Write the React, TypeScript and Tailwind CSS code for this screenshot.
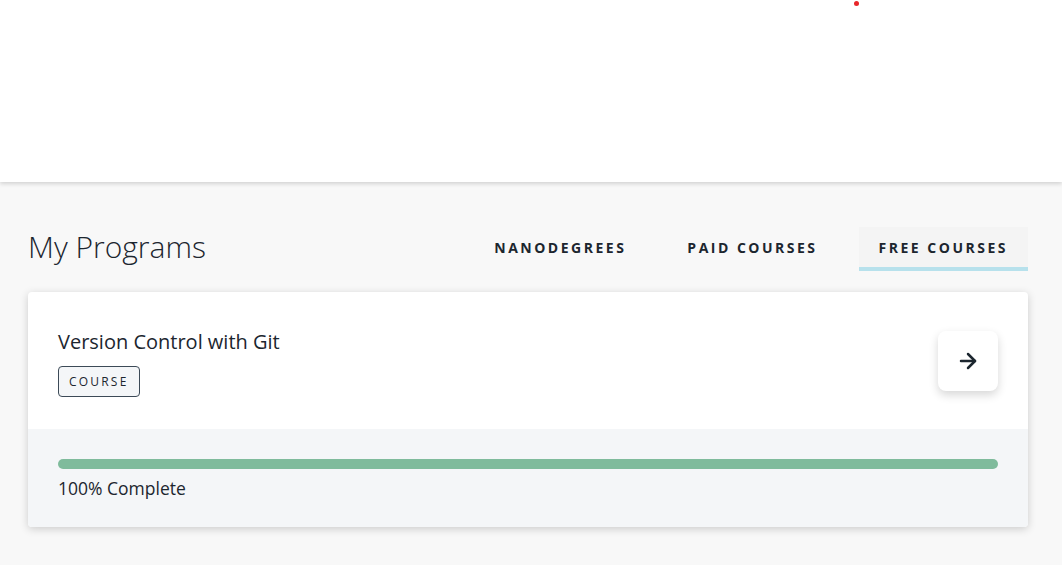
import { ArrowRight } from "lucide-react";

const tabs = ["NANODEGREES", "PAID COURSES", "FREE COURSES"];

function App() {
  return (
    <div className="min-h-[565px] bg-[#f8f8f8] font-['Open_Sans',sans-serif] text-[#1c262f]">
      <header className="relative h-[182px] bg-white shadow-[0_2px_4px_rgba(0,0,0,0.15)]">
        <span className="absolute left-[854px] top-[1px] h-[5px] w-[5px] rounded-full bg-[#e8262a]" />
      </header>
      <main className="w-[1000px] ml-[28px] pt-[45px]">
        <div className="flex items-end justify-between">
          <h1 className="text-[30px] font-light leading-[40px] pb-[4px] text-[#1c262f]">My Programs</h1>
          <nav className="flex">
            {tabs.map((t, i) => (
              <div
                key={t}
                className={
                  "h-[44px] px-[20px] flex items-center text-[14px] font-bold tracking-[2.5px] border-b-4 " +
                  (i === 2 ? "bg-[#f4f4f4] border-[#b7e1ec]" : "border-transparent mr-[21px]")
                }
              >
                {t}
              </div>
            ))}
          </nav>
        </div>
        <div className="mt-[21px] rounded-[4px] bg-white shadow-[0_2px_8px_rgba(0,0,0,0.18)] overflow-hidden">
          <div className="h-[137px] px-[30px] flex items-center justify-between">
            <div className="pt-[4px]">
              <h2 className="text-[20px] leading-[28px]">Version Control with Git</h2>
              <span className="mt-[10px] inline-flex h-[31px] items-center rounded-[4px] border border-[#3c4a57] bg-[#f4f6f8] px-[10px] text-[12px] font-medium tracking-[2.2px] text-[#1c262f]">
                COURSE
              </span>
            </div>
            <div className="h-[60px] w-[60px] rounded-[8px] bg-white shadow-[0_4px_10px_rgba(0,0,0,0.16)] flex items-center justify-center">
              <ArrowRight size={24} strokeWidth={2.5} className="text-[#1c262f]" />
            </div>
          </div>
          <div className="h-[98px] bg-[#f4f6f8] px-[30px] pt-[30px]">
            <div className="h-[10px] rounded-full bg-[#7fbb9c]" />
            <p className="mt-[7px] text-[17.5px] leading-[24px]">100% Complete</p>
          </div>
        </div>
      </main>
    </div>
  );
}

export default App;
